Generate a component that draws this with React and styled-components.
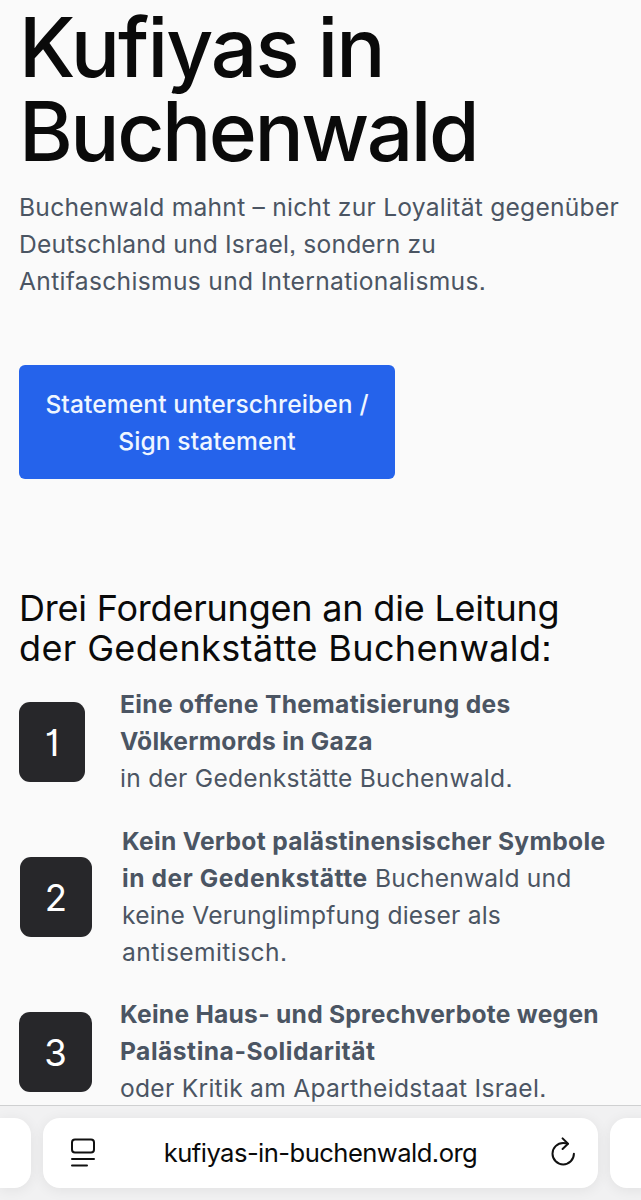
import React from "react";
import styled, { createGlobalStyle } from "styled-components";

const GlobalStyle = createGlobalStyle`
  * {
    box-sizing: border-box;
  }
  body {
    margin: 0;
    background: #fafafa;
    font-family: Inter, "Liberation Sans", sans-serif;
    font-feature-settings: "ss07", "cv01";
    -webkit-font-smoothing: antialiased;
  }
`;

const Screen = styled.div`
  display: flex;
  flex-direction: column;
  width: 641px;
  height: 1200px;
  overflow: hidden;
`;

const Page = styled.main`
  flex: 1;
  min-height: 0;
  overflow: hidden;
  padding: 6px 0 0 19px;
  background: #fafafa;
`;

// one line of copy, $track is its letter spacing in px
const Line = styled.span`
  display: block;
  white-space: nowrap;
  letter-spacing: ${({ $track = 0 }) => $track}px;
`;

const Title = styled.h1`
  margin: 0;
  font-size: 82px;
  line-height: 84px;
  font-weight: 500;
  color: #0a0a0a;
`;

const Lead = styled.p`
  margin: 15px 0 0;
  font-size: 24.6px;
  line-height: 37px;
  color: #4b5563;
`;

const SignButton = styled.button`
  display: block;
  width: 376px;
  height: 114px;
  margin: 65px 0 0;
  padding: 2px 0 0;
  border: 0;
  border-radius: 6px;
  background: #2563eb;
  color: #eff6ff;
  font: 500 24.6px/37px Inter, sans-serif;
  text-align: center;
`;

const Heading = styled.h2`
  margin: 109px 0 18px;
  font-size: 36px;
  line-height: 40px;
  font-weight: 400;
  color: #0a0a0a;
`;

const Demands = styled.ol`
  display: flex;
  flex-direction: column;
  gap: 25px;
  margin: 0;
  padding: 0;
  list-style: none;
`;

const Demand = styled.li`
  display: flex;
  align-items: center;
  gap: ${({ $gap }) => $gap}px;
  padding-left: ${({ $inset = 0 }) => $inset}px;

  &:first-child {
    margin-bottom: 1px;
  }
`;

const Badge = styled.div`
  display: flex;
  align-items: center;
  justify-content: center;
  flex: none;
  width: ${({ $width }) => $width}px;
  height: 80px;
  padding-top: 2px;
  border-radius: 11px;
  background: #27272a;
  color: #fff;
  font-size: 36.5px;
`;

const DemandText = styled.div`
  font-size: 24.6px;
  line-height: 37px;
  color: #4b5563;

  strong {
    font-weight: 700;
  }
`;

const Lede = styled.strong`
  letter-spacing: 0.55px;
`;

const Toolbar = styled.footer`
  display: flex;
  flex: none;
  gap: 12px;
  height: 95px;
  padding-top: 12px;
  border-top: 1px solid #cfd0d1;
  background: #f1f1f2;
`;

const Tab = styled.div`
  flex: none;
  width: ${({ $width }) => $width}px;
  height: 70px;
  border-radius: ${({ $radius }) => $radius};
  background: #fff;
  box-shadow: 0 2px 14px rgba(0, 0, 0, 0.07);
`;

const AddressBar = styled(Tab)`
  display: flex;
  align-items: center;
  justify-content: space-between;
  padding: 0 21px 0 26px;
`;

const Address = styled.span`
  margin-right: 5px;
  font-size: 25.6px;
  line-height: 32px;
  color: #0a0a0a;
  white-space: nowrap;
  letter-spacing: ${({ $track }) => $track}px;
`;

const ReaderIcon = () => (
  <svg width="28" height="32" viewBox="0 0 28 32" fill="none" stroke="#111" strokeWidth="2" strokeLinecap="round">
    <rect x="3" y="2.4" width="22" height="13" rx="3" />
    <path d="M3 22h22M3 28.6h15" />
  </svg>
);

const ReloadIcon = () => (
  <svg width="28" height="32" viewBox="0 0 28 32" fill="none" stroke="#111" strokeWidth="2" strokeLinecap="round" strokeLinejoin="round">
    <path d="M18.6 6.9C17.3 6.3 15.7 6 14.2 6A10.7 10.7 0 1 0 24.9 16.7" />
    <path d="M13.6 1.4l5.4 5.4-5.4 5.2" />
  </svg>
);

const App = () => (
  <>
    <GlobalStyle />
    <Screen>
      <Page>
        <Title>
          <Line $track={-1.95}>Kufiyas in</Line>
          <Line $track={-2.5}>Buchenwald</Line>
        </Title>
        <Lead>
          <Line $track={0.25}>Buchenwald mahnt – nicht zur Loyalität gegenüber</Line>
          <Line $track={0.17}>Deutschland und Israel, sondern zu</Line>
          <Line $track={0.32}>Antifaschismus und Internationalismus.</Line>
        </Lead>
        <SignButton>
          <Line $track={0.1}>Statement unterschreiben /</Line>
          <Line $track={0.08}>Sign statement</Line>
        </SignButton>
        <Heading>
          <Line $track={-0.2}>Drei Forderungen an die Leitung</Line>
          <Line $track={0.36}>der Gedenkstätte Buchenwald:</Line>
        </Heading>
        <Demands>
          <Demand $gap={35}>
            <Badge $width={66}>1</Badge>
            <DemandText>
              <Line as="strong" $track={0.33}>Eine offene Thematisierung des</Line>
              <Line as="strong" $track={0.25}>Völkermords in Gaza</Line>
              <Line $track={0.26}>in der Gedenkstätte Buchenwald.</Line>
            </DemandText>
          </Demand>
          <Demand $gap={30} $inset={1}>
            <Badge $width={72}>2</Badge>
            <DemandText>
              <Line as="strong" $track={0.31}>Kein Verbot palästinensischer Symbole</Line>
              <Line $track={0.17}>
                <Lede>in der Gedenkstätte</Lede> Buchenwald und
              </Line>
              <Line $track={0.2}>keine Verunglimpfung dieser als</Line>
              <Line $track={0.4}>antisemitisch.</Line>
            </DemandText>
          </Demand>
          <Demand $gap={28}>
            <Badge $width={73}>3</Badge>
            <DemandText>
              <Line as="strong" $track={0.26}>Keine Haus- und Sprechverbote wegen</Line>
              <Line as="strong" $track={0.5}>Palästina-Solidarität</Line>
              <Line $track={0.27}>oder Kritik am Apartheidstaat Israel.</Line>
            </DemandText>
          </Demand>
        </Demands>
      </Page>
      <Toolbar>
        <Tab $width={31} $radius="0 17px 17px 0" />
        <AddressBar $width={555} $radius="17px">
          <ReaderIcon />
          <Address $track={-0.55}>kufiyas-in-buchenwald.org</Address>
          <ReloadIcon />
        </AddressBar>
        <Tab $width={40} $radius="17px 0 0 17px" />
      </Toolbar>
    </Screen>
  </>
);

export default App;
